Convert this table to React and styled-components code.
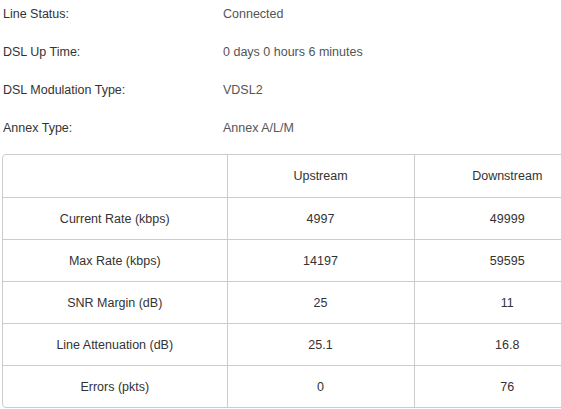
import styled, { createGlobalStyle } from 'styled-components';

const GlobalStyle = createGlobalStyle`
  html, body {
    margin: 0;
    padding: 0;
    background: #fff;
    overflow: hidden;
  }
  body {
    font-family: "Liberation Sans", Arial, sans-serif;
    font-size: 12.5px;
    color: #333;
  }
`;

const info = [
  ['Line Status:', 'Connected'],
  ['DSL Up Time:', '0 days 0 hours 6 minutes'],
  ['DSL Modulation Type:', 'VDSL2'],
  ['Annex Type:', 'Annex A/L/M'],
];

const stats = [
  ['Current Rate (kbps)', '4997', '49999'],
  ['Max Rate (kbps)', '14197', '59595'],
  ['SNR Margin (dB)', '25', '11'],
  ['Line Attenuation (dB)', '25.1', '16.8'],
  ['Errors (pkts)', '0', '76'],
];

const App = () => {
  return (
    <Page>
      <GlobalStyle />
      <InfoList>
        {info.map(([label, value]) => (
          <InfoRow key={label}>
            <Label>{label}</Label>
            <Value>{value}</Value>
          </InfoRow>
        ))}
      </InfoList>
      <TableWrap>
        <Table>
          <colgroup>
            <col style={{ width: 224 }} />
            <col style={{ width: 187 }} />
            <col style={{ width: 186 }} />
          </colgroup>
          <thead>
            <tr>
              <Th></Th>
              <Th>Upstream</Th>
              <Th $last>Downstream</Th>
            </tr>
          </thead>
          <tbody>
            {stats.map(([name, up, down], i) => (
              <tr key={name}>
                <Td $bottom={i === stats.length - 1}>{name}</Td>
                <Td $bottom={i === stats.length - 1}>{up}</Td>
                <Td $bottom={i === stats.length - 1} $last>{down}</Td>
              </tr>
            ))}
          </tbody>
        </Table>
      </TableWrap>
    </Page>
  );
};

const Page = styled.div`
  width: 620px;
  padding: 0 0 0 2px;
`;

const InfoList = styled.div`
  display: flex;
  flex-direction: column;
  gap: 10px;
  margin-bottom: 12px;
`;

const InfoRow = styled.div`
  display: grid;
  grid-template-columns: 221px 1fr;
  height: 28px;
  line-height: 28px;
`;

const Label = styled.span`
  padding-left: 1px;
  color: #333;
`;

const Value = styled.span`
  color: #555;
`;

const TableWrap = styled.div`
  display: inline-block;
  border: 1px solid #ccc;
  border-radius: 4px;
  overflow: hidden;
`;

const Table = styled.table`
  width: 597px;
  border-collapse: collapse;
  table-layout: fixed;
`;

const Th = styled.th`
  height: 42px;
  padding: 0;
  font-weight: normal;
  text-align: center;
  color: #333;
  border-bottom: 1px solid #ccc;
  border-right: ${(p) => (p.$last ? 'none' : '1px solid #ccc')};
`;

const Td = styled.td`
  height: 41px;
  padding: 0;
  text-align: center;
  color: #333;
  border-bottom: ${(p) => (p.$bottom ? 'none' : '1px solid #ccc')};
  border-right: ${(p) => (p.$last ? 'none' : '1px solid #ccc')};
`;

export default App;
